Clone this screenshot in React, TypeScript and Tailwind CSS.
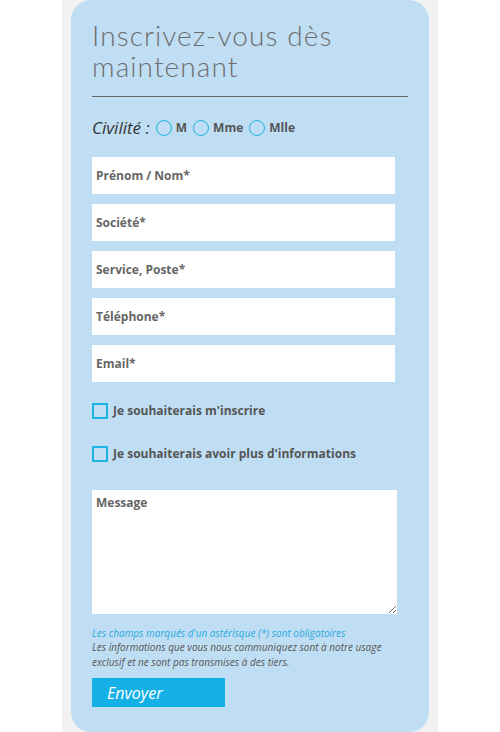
import { useState } from "react";

const fields = ["Prénom / Nom*", "Société*", "Service, Poste*", "Téléphone*", "Email*"];

const Radio = ({ label }: { label: string }) => (
  <label className="flex items-center gap-[4px] cursor-pointer">
    <span className="w-[16px] h-[16px] rounded-full border-[1.5px] border-[#1cb2e6] bg-[#c0def3]" />
    <span className="text-[12px] font-bold text-[#555]">{label}</span>
  </label>
);

const Check = ({ label }: { label: string }) => (
  <label className="flex items-center gap-[5px] cursor-pointer">
    <span className="w-[16px] h-[16px] border-2 border-[#1cb2e6] bg-[#c0def3]" />
    <span className="text-[12px] font-bold text-[#555]">{label}</span>
  </label>
);

export default function App() {
  const [msg, setMsg] = useState("");
  return (
    <div className="min-h-[732px] bg-white flex justify-center" style={{ fontFamily: "'Open Sans', sans-serif" }}>
      <div className="w-[376px] bg-[#f2f2f2] px-[9px]">
        <div className="bg-[#c0def3] rounded-[20px] h-[732px] pl-[21px] pr-[21px] pt-[20px]">
          <h2
            className="text-[28px] leading-[31px] font-light text-[#6d6d6d] tracking-[1.1px] pb-[14px] border-b border-[#666]"
            style={{ fontFamily: "Lato, sans-serif" }}
          >
            Inscrivez-vous dès maintenant
          </h2>

          <div className="flex items-center gap-[6px] mt-[18px]">
            <span className="italic text-[17px] text-[#333]">Civilité :</span>
            <Radio label="M" />
            <Radio label="Mme" />
            <Radio label="Mlle" />
          </div>

          <div className="flex flex-col gap-[10px] mt-[16px]">
            {fields.map((f) => (
              <input
                key={f}
                placeholder={f}
                className="w-[303px] h-[37px] bg-white px-[4px] text-[12px] font-bold text-[#555] placeholder:text-[#666] outline-none"
              />
            ))}
          </div>

          <div className="flex flex-col gap-[25px] mt-[20px]">
            <Check label="Je souhaiterais m'inscrire" />
            <Check label="Je souhaiterais avoir plus d'informations" />
          </div>

          <textarea
            value={msg}
            onChange={(e) => setMsg(e.target.value)}
            placeholder="Message"
            className="block w-[305px] h-[124px] mt-[27px] bg-white px-[4px] py-[4px] text-[12px] font-bold text-[#555] placeholder:text-[#666] outline-none"
          />

          <div className="mt-[12px] italic text-[10px] leading-[14.5px]">
            <p className="text-[#2aa9e0]">Les champs marqués d'un astérisque (*) sont obligatoires</p>
            <p className="text-[#555] w-[300px]">
              Les informations que vous nous communiquez sont à notre usage exclusif et ne sont pas transmises à des tiers.
            </p>
          </div>

          <button className="mt-[9px] w-[133px] h-[29px] bg-[#15b0e6] text-white italic text-[16px] text-left pl-[15px]">
            Envoyer
          </button>
        </div>
      </div>
    </div>
  );
}
